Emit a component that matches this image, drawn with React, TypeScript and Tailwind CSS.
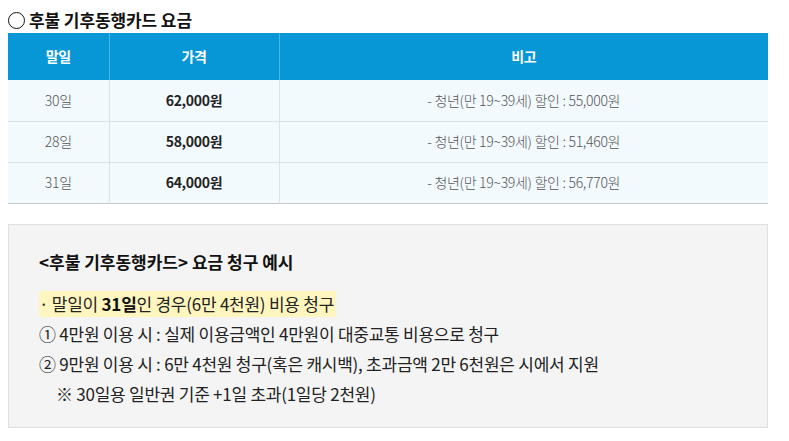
import React from "react";

const rows = [
  { day: "30일", price: "62,000원", note: "- 청년(만 19~39세) 할인 : 55,000원" },
  { day: "28일", price: "58,000원", note: "- 청년(만 19~39세) 할인 : 51,460원" },
  { day: "31일", price: "64,000원", note: "- 청년(만 19~39세) 할인 : 56,770원" },
];

const App = () => {
  return (
    <div
      className="w-[789px] h-[441px] bg-white pl-2 pt-[7px] text-[#222]"
      style={{ fontFamily: '"Noto Sans CJK KR", "Noto Sans", sans-serif' }}
    >
      <h2 className="flex items-center h-[26px] text-[17px] font-bold tracking-[-0.1px] text-[#111]">
        <span className="inline-block w-[17px] h-[17px] rounded-full border-[1.5px] border-[#111] mr-[4px]" />
        후불 기후동행카드 요금
      </h2>

      <table className="w-[760px] border-collapse text-[14px] tracking-[-0.3px] border-b border-[#c8c8c8]">
        <thead>
          <tr className="bg-[#0796d6] text-white h-[47px]">
            <th className="w-[101px] font-bold border-r border-[#4fb3e3]">말일</th>
            <th className="w-[170px] font-bold border-r border-[#4fb3e3]">가격</th>
            <th className="font-bold">비고</th>
          </tr>
        </thead>
        <tbody>
          {rows.map((r, i) => (
            <tr
              key={r.day}
              className={`bg-[#f3fafe] h-[41px] ${i < rows.length - 1 ? "border-b border-[#dde2e6]" : ""}`}
            >
              <td className="text-center text-[#555] border-r border-[#dde2e6] font-light">{r.day}</td>
              <td className="text-center font-bold text-[#222] border-r border-[#dde2e6]">{r.price}</td>
              <td className="text-center text-[#555] font-light">{r.note}</td>
            </tr>
          ))}
        </tbody>
      </table>

      <div className="mt-5 w-[760px] h-[204px] bg-[#f4f4f4] border border-[#e0e0e0] pl-[30px] pt-[22px] text-[17px] tracking-[-0.25px] text-[#222]">
        <p className="font-bold text-[17px] tracking-normal text-[#111] leading-[30px]">&lt;후불 기후동행카드&gt; 요금 청구 예시</p>
        <div className="mt-[12px] leading-[30px]">
          <p>
            <span className="bg-[#fff6bf] pr-[2px] inline-block h-[26px] leading-[26px]">
              · 말일이 <b className="font-bold text-[#111]">31일</b>인 경우(6만 4천원) 비용 청구
            </span>
          </p>
          <p>① 4만원 이용 시 : 실제 이용금액인 4만원이 대중교통 비용으로 청구</p>
          <p>② 9만원 이용 시 : 6만 4천원 청구(혹은 캐시백), 초과금액 2만 6천원은 시에서 지원</p>
          <p className="pl-[17px]">※ 30일용 일반권 기준 +1일 초과(1일당 2천원)</p>
        </div>
      </div>
    </div>
  );
};

export default App;
